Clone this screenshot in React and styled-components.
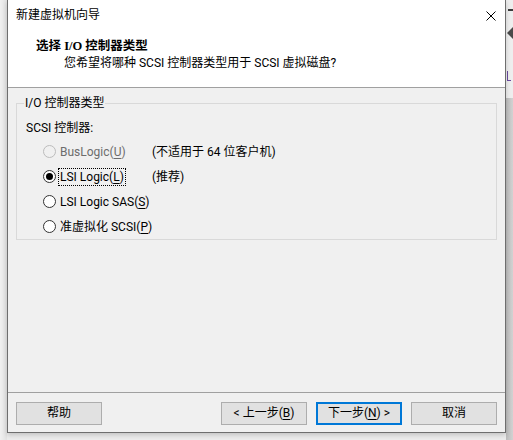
import React from "react";
import styled, { createGlobalStyle } from "styled-components";

const Global = createGlobalStyle`
  html, body { margin: 0; padding: 0; width: 513px; height: 440px; overflow: hidden; }
  body { font-family: "Segoe UI", Roboto, "Noto Sans CJK SC", sans-serif; font-size: 12px; color: #000; background: #ececec; }
  * { box-sizing: border-box; }
`;

const FONT = `"Segoe UI", Roboto, "Noto Sans CJK SC", sans-serif`;

const Screen = styled.div`
  display: flex;
  width: 513px;
  height: 440px;
  background: #ececec;
`;

const LeftGap = styled.div`
  width: 7px;
  flex: none;
  background: linear-gradient(to right, #f0f0f0, #e2e2e2);
`;

const Window = styled.div`
  width: 499px;
  height: 433px;
  flex: none;
  display: flex;
  flex-direction: column;
  background: #f0f0f0;
  border: 1px solid #6e6e6e;
  border-top: none;
  box-shadow: 0 2px 5px rgba(0, 0, 0, 0.18);
  position: relative;
  z-index: 1;
`;

const SideStrip = styled.div`
  width: 7px;
  flex: none;
  display: flex;
  flex-direction: column;
`;

const SideTop = styled.div`
  height: 98px;
  background: #eeeeee;
  display: flex;
  flex-direction: column;
  align-items: flex-end;
`;

const SideDash = styled.div`
  width: 5px;
  height: 2px;
  margin-top: 9px;
  background: #3a3a3a;
`;

const SideArrow = styled.div`
  width: 0;
  height: 0;
  margin-top: 16px;
  border-top: 6px solid transparent;
  border-bottom: 6px solid transparent;
  border-right: 6px solid #4a4a4a;
`;

const SideGlyph = styled.div`
  margin-top: 32px;
  width: 4px;
  height: 10px;
  border-left: 1px solid #6a4aa0;
  border-bottom: 1px solid #6a4aa0;
  margin-right: 2px;
`;

const SideBottom = styled.div`
  flex: 1;
  background: linear-gradient(to right, #bcbcbc, #d2d2d2);
`;

const TitleBar = styled.div`
  height: 31px;
  flex: none;
  background: #fff;
  display: flex;
  align-items: center;
  justify-content: space-between;
  padding: 0 9px 0 8px;
  font-size: 12px;
  line-height: 31px;
`;

const Header = styled.div`
  height: 57px;
  flex: none;
  background: #fff;
  border-bottom: 1px solid #a0a0a0;
  padding: 7px 0 0 28px;
`;

const Heading = styled.div`
  font-family: "Liberation Serif", "Noto Sans CJK SC", serif;
  font-weight: 700;
  font-size: 12.5px;
  line-height: 17px;
`;

const SubHeading = styled.div`
  font-size: 12px;
  line-height: 17px;
  padding-left: 28px;
`;

const Body = styled.div`
  flex: 1;
  padding: 7px 8px 0;
`;

const Group = styled.fieldset`
  margin: 0;
  border: 1px solid #d9d9d9;
  padding: 9px 0 0 9px;
  min-width: 0;
`;

const GroupTitle = styled.legend`
  padding: 0 1px;
  margin-left: -2px;
  line-height: 16px;
  font-size: 12px;
`;

const FieldLabel = styled.div`
  line-height: 16px;
  margin-bottom: 3px;
`;

const OptionGrid = styled.div`
  display: grid;
  grid-template-columns: 109px auto;
  grid-auto-rows: 25px;
  padding-left: 17px;
  align-items: center;
`;

const OptionCell = styled.label`
  display: flex;
  align-items: center;
  white-space: nowrap;
  color: ${(p) => (p.$disabled ? "#6d6d6d" : "#000")};
  line-height: 16px;
`;

const Radio = styled.span`
  width: 13px;
  height: 13px;
  border-radius: 50%;
  flex: none;
  border: 1px solid ${(p) => (p.$disabled ? "#bcbcbc" : "#333")};
  background: ${(p) => (p.$disabled ? "#f0f0f0" : "#fff")};
  display: flex;
  align-items: center;
  justify-content: center;
  margin-right: 2px;
  &::after {
    content: "";
    width: 7px;
    height: 7px;
    border-radius: 50%;
    background: ${(p) => (p.$checked ? "#000" : "transparent")};
  }
`;

const OptionText = styled.span`
  padding: 0 1px;
  white-space: nowrap;
  border: 1px dotted ${(p) => (p.$focused ? "#000" : "transparent")};
`;

const Note = styled.span`
  line-height: 16px;
  white-space: nowrap;
`;

const Key = styled.span`
  text-decoration: underline;
  text-underline-offset: 2px;
`;

const Footer = styled.div`
  height: 40px;
  flex: none;
  border-top: 1px solid #a0a0a0;
  display: flex;
  align-items: flex-start;
  gap: 9px;
  padding: 9px 8px 0;
`;

const Button = styled.button`
  width: 86px;
  height: 23px;
  padding: 0;
  font-family: ${FONT};
  font-size: 12px;
  color: #000;
  background: #e1e1e1;
  border: ${(p) => (p.$primary ? "2px solid #0078d7" : "1px solid #adadad")};
  margin-left: ${(p) => (p.$pushRight ? "auto" : "0")};
  line-height: 19px;
`;

const CloseIcon = () => (
  <svg width="10" height="10" viewBox="0 0 10 10" style={{ display: "block" }}>
    <path d="M0.5 0.5 L9.5 9.5 M9.5 0.5 L0.5 9.5" stroke="#000" strokeWidth="1" fill="none" />
  </svg>
);

const options = [
  { label: "BusLogic(", key: "U", note: "(不适用于 64 位客户机)", disabled: true },
  { label: "LSI Logic(", key: "L", note: "(推荐)", checked: true, focused: true },
  { label: "LSI Logic SAS(", key: "S" },
  { label: "准虚拟化 SCSI(", key: "P" },
];

export default function App() {
  return (
    <>
      <Global />
      <Screen>
        <LeftGap />
        <Window>
          <TitleBar>
            <span>新建虚拟机向导</span>
            <CloseIcon />
          </TitleBar>
          <Header>
            <Heading>选择 I/O 控制器类型</Heading>
            <SubHeading>您希望将哪种 SCSI 控制器类型用于 SCSI 虚拟磁盘?</SubHeading>
          </Header>
          <Body>
            <Group>
              <GroupTitle>I/O 控制器类型</GroupTitle>
              <FieldLabel>SCSI 控制器:</FieldLabel>
              <OptionGrid>
                {options.map((o) => (
                  <React.Fragment key={o.key}>
                    <OptionCell $disabled={o.disabled}>
                      <Radio $disabled={o.disabled} $checked={o.checked} />
                      <OptionText $focused={o.focused}>
                        {o.label}
                        <Key>{o.key}</Key>)
                      </OptionText>
                    </OptionCell>
                    <Note>{o.note || ""}</Note>
                  </React.Fragment>
                ))}
              </OptionGrid>
            </Group>
          </Body>
          <Footer>
            <Button>帮助</Button>
            <Button $pushRight>
              &lt; 上一步(<Key>B</Key>)
            </Button>
            <Button $primary>
              下一步(<Key>N</Key>) &gt;
            </Button>
            <Button>取消</Button>
          </Footer>
        </Window>
        <SideStrip>
          <SideTop>
            <SideDash />
            <SideArrow />
            <SideGlyph />
          </SideTop>
          <SideBottom />
        </SideStrip>
      </Screen>
    </>
  );
}
